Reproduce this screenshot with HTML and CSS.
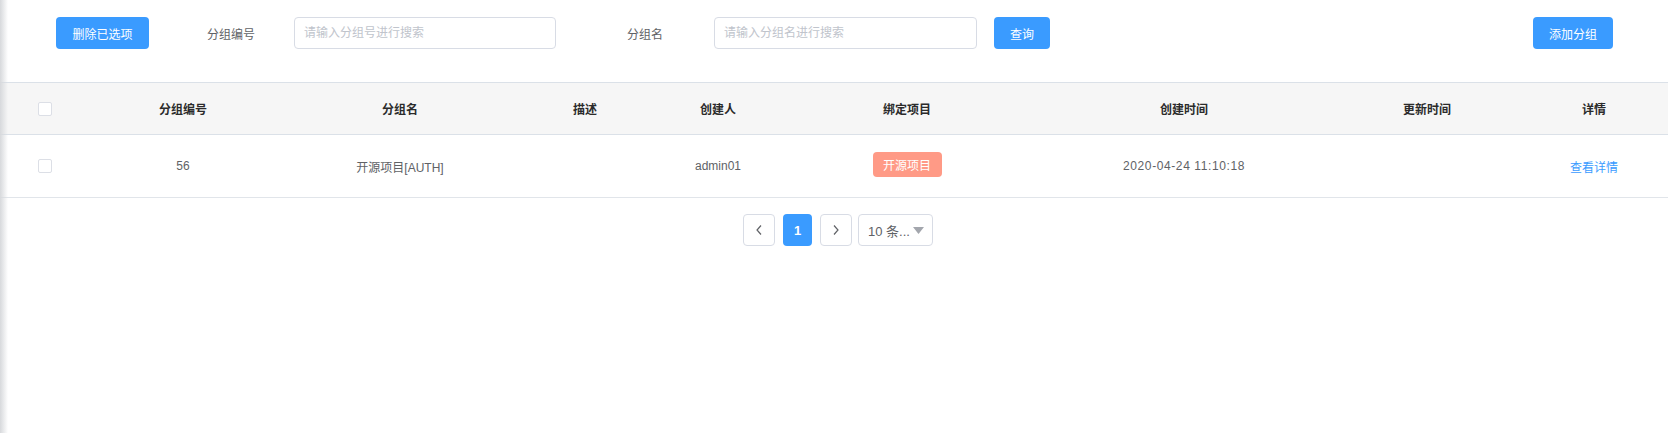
FILE: index.html
```html
<!DOCTYPE html>
<html lang="zh-CN">
<head>
<meta charset="utf-8">
<title>分组管理</title>
<link rel="stylesheet" href="styles.css">
</head>
<body>
<div class="page">
  <div class="shadow"></div>
  <div class="main">
    <div class="toolbar">
      <button class="btn btn-del">删除已选项</button>
      <span class="label label-1">分组编号</span>
      <input class="input input-1" type="text" placeholder="请输入分组号进行搜索">
      <span class="label label-2">分组名</span>
      <input class="input input-2" type="text" placeholder="请输入分组名进行搜索">
      <button class="btn btn-query">查询</button>
      <span class="spacer"></span>
      <button class="btn btn-add">添加分组</button>
    </div>

    <div class="table">
      <div class="row head">
        <div class="cell c-check"><span class="checkbox"></span></div>
        <div class="cell">分组编号</div>
        <div class="cell">分组名</div>
        <div class="cell">描述</div>
        <div class="cell">创建人</div>
        <div class="cell">绑定项目</div>
        <div class="cell">创建时间</div>
        <div class="cell">更新时间</div>
        <div class="cell">详情</div>
      </div>
      <div class="row body">
        <div class="cell c-check"><span class="checkbox"></span></div>
        <div class="cell">56</div>
        <div class="cell">开源项目[AUTH]</div>
        <div class="cell"></div>
        <div class="cell">admin01</div>
        <div class="cell"><span class="tag">开源项目</span></div>
        <div class="cell"><span class="date">2020-04-24 11:10:18</span></div>
        <div class="cell"></div>
        <div class="cell"><a class="link">查看详情</a></div>
      </div>
    </div>

    <div class="pager">
      <button class="pg pg-arrow">
        <svg width="12" height="14" viewBox="0 0 12 14"><path d="M8 2.5 L4 7 L8 11.5" fill="none" stroke="#606266" stroke-width="1.2"/></svg>
      </button>
      <button class="pg pg-num">1</button>
      <button class="pg pg-arrow">
        <svg width="12" height="14" viewBox="0 0 12 14"><path d="M4 2.5 L8 7 L4 11.5" fill="none" stroke="#606266" stroke-width="1.2"/></svg>
      </button>
      <div class="pg pg-size">
        <span>10 条...</span>
        <svg width="11" height="7" viewBox="0 0 11 7"><path d="M0 0 H11 L5.5 7 Z" fill="#a3a6ad"/></svg>
      </div>
    </div>
  </div>
</div>
</body>
</html>
```

FILE: styles.css
```css
* { box-sizing: border-box; }
html, body {
  margin: 0;
  padding: 0;
  background: #ffffff;
}
body {
  font-family: "Liberation Sans", "Noto Sans CJK SC", sans-serif;
  font-size: 12px;
  color: #606266;
  width: 1668px;
  height: 433px;
  overflow: hidden;
}
.page {
  position: relative;
  width: 1668px;
  height: 433px;
}
.shadow {
  position: absolute;
  left: 0;
  top: 0;
  bottom: 0;
  width: 8px;
  background: linear-gradient(to right, #d7d9dc, rgba(255,255,255,0));
  pointer-events: none;
  z-index: 2;
}
.main {
  width: 100%;
}
.toolbar {
  display: flex;
  align-items: center;
  height: 82px;
  padding: 17px 55px 33px 56px;
}
.btn {
  height: 32px;
  border: none;
  border-radius: 4px;
  background: #3a9bff;
  color: #ffffff;
  font-family: "Liberation Sans", "Noto Sans CJK SC", sans-serif;
  font-size: 12px;
  padding: 0;
  cursor: pointer;
}
.btn-del { width: 93px; }
.btn-query { width: 56px; margin-left: 17px; }
.btn-add { width: 80px; }
.label {
  color: #606266;
  font-size: 12px;
}
.label-1 { margin-left: 58px; }
.label-2 { margin-left: 71px; }
.input {
  height: 32px;
  border: 1px solid #d8dce5;
  border-radius: 4px;
  padding: 0 9px;
  font-family: "Liberation Sans", "Noto Sans CJK SC", sans-serif;
  font-size: 12px;
  color: #606266;
  outline: none;
  background: #fff;
}
.input::placeholder { color: #c0c4cc; }
.input-1 { width: 262px; margin-left: 39px; }
.input-2 { width: 263px; margin-left: 51px; }
.spacer { flex: 1; }

.table {
  width: 100%;
  border-top: 1px solid #dbe1e8;
}
.row {
  display: grid;
  grid-template-columns: 80px 206px 228px 142px 124px 254px 300px 186px 148px;
  border-bottom: 1px solid #e1e5ea;
}
.head {
  height: 52px;
  background: #f6f6f6;
  color: #2b2b2b;
  font-weight: bold;
  border-bottom-color: #dbe1e8;
}
.body {
  height: 63px;
  color: #606266;
}
.cell {
  display: flex;
  align-items: center;
  justify-content: center;
}
.c-check {
  justify-content: flex-start;
  padding-left: 38px;
}
.checkbox {
  width: 14px;
  height: 14px;
  border: 1px solid #dcdfe6;
  border-radius: 2px;
  background: #ffffff;
}
.date {
  letter-spacing: 0.6px;
}
.tag {
  display: inline-flex;
  align-items: center;
  justify-content: center;
  width: 69px;
  height: 25px;
  border-radius: 4px;
  background: #ff9a86;
  color: #ffffff;
  font-size: 12px;
  margin-top: -4px;
}
.link {
  color: #3a9bff;
  cursor: pointer;
}

.pager {
  display: flex;
  justify-content: center;
  align-items: center;
  padding-top: 16px;
  padding-left: 8px;
}
.pg {
  height: 32px;
  border: 1px solid #d8dce5;
  border-radius: 4px;
  background: #ffffff;
  display: flex;
  align-items: center;
  justify-content: center;
  padding: 0;
  font-family: "Liberation Sans", "Noto Sans CJK SC", sans-serif;
  font-size: 13px;
}
.pg-arrow { width: 32px; }
.pg-num {
  width: 29px;
  margin: 0 8px;
  border: none;
  background: #3a9bff;
  color: #ffffff;
  font-weight: bold;
}
.pg-size {
  width: 75px;
  margin-left: 6px;
  justify-content: space-between;
  padding: 0 8px 0 9px;
  color: #606266;
}
```
